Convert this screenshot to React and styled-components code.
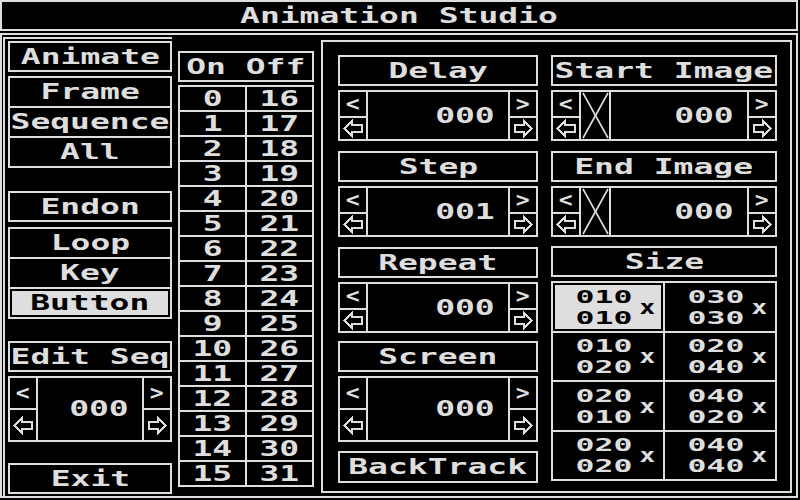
import React from 'react';
import styled, { createGlobalStyle, css } from 'styled-components';

const FG = '#dedede';

const Global = createGlobalStyle`
  html, body { margin: 0; padding: 0; background: #000; }
  body { font-family: "DejaVu Sans Mono", monospace; }
  * { box-sizing: border-box; }
`;

const Screen = styled.div`
  width: 800px;
  height: 500px;
  background: #000;
  color: ${FG};
  display: flex;
  flex-direction: column;
  overflow: hidden;
`;

const Glyphs = styled.span`
  display: inline-block;
  font-family: "DejaVu Sans Mono", monospace;
  font-weight: bold;
  font-size: 22px;
  line-height: 22px;
  white-space: pre;
  transform: scaleX(${(p) => p.$sx || 1.5});
  transform-origin: ${(p) => p.$origin || 'center'} center;
`;

const TitleBar = styled.div`
  width: 798px;
  height: 31px;
  border: 2px solid ${FG};
  display: flex;
  align-items: center;
  justify-content: center;
`;

const Frame = styled.div`
  margin-top: 2px;
  width: 798px;
  height: 465px;
  border: 2px solid ${FG};
  display: flex;
  align-items: flex-start;
`;

const LeftCol = styled.div`
  align-self: stretch;
  margin: 2px 0 0 1px;
  width: 169px;
  border-left: 2px solid ${FG};
  border-top: 2px solid ${FG};
  padding: 2px 0 0 3px;
  display: flex;
  flex-direction: column;
`;

const Header = styled.div`
  flex: none;
  height: ${(p) => p.$h || 31}px;
  margin-top: ${(p) => p.$mt || 0}px;
  border: 2px solid ${FG};
  display: flex;
  align-items: center;
  justify-content: center;
`;

const ButtonList = styled.div`
  flex: none;
  margin-top: ${(p) => p.$mt || 0}px;
  display: grid;
  grid-template-rows: repeat(3, 28px);
  gap: 2px;
  padding: 2px;
  background: ${FG};
`;

const ListItem = styled.div`
  background: #000;
  display: flex;
  align-items: center;
  justify-content: center;
  ${(p) =>
    p.$selected &&
    css`
      background: ${FG};
      color: #000;
      box-shadow: inset 0 0 0 2px #000;
    `}
`;

const Spinner = styled.div`
  flex: none;
  margin-top: 4px;
  height: ${(p) => p.$h}px;
  border: 2px solid ${FG};
  display: flex;
`;

const StepCol = styled.div`
  flex: none;
  width: 28px;
  display: flex;
  flex-direction: column;
  border-${(p) => (p.$side === 'left' ? 'left' : 'right')}: 2px solid ${FG};
`;

const StepTop = styled.div`
  flex: none;
  height: ${(p) => p.$h}px;
  border-bottom: 2px solid ${FG};
  display: flex;
  align-items: center;
  justify-content: center;
`;

const StepBottom = styled.div`
  flex: 1;
  display: flex;
  align-items: center;
  justify-content: center;
`;

const XCell = styled.div`
  flex: none;
  width: 30px;
  border-right: 2px solid ${FG};
  display: flex;
`;

const XSvg = styled.svg`
  display: block;
  width: 100%;
  height: 100%;
`;

const ValueArea = styled.div`
  flex: 1;
  display: flex;
  align-items: center;
  justify-content: flex-end;
  padding-right: 13px;
`;

const ArrowSvg = styled.svg`
  display: block;
  transform: ${(p) => (p.$flip ? 'scaleX(-1)' : 'none')};
`;

const OnOff = styled.div`
  flex: none;
  margin: 16px 0 0 6px;
  width: 136px;
  display: flex;
  flex-direction: column;
`;

const NumGrid = styled.div`
  margin-top: 3px;
  display: grid;
  grid-template-columns: 1fr 1fr;
  grid-auto-rows: 23px;
  gap: 2px;
  padding: 2px;
  background: ${FG};
`;

const NumCell = styled.div`
  background: #000;
  display: flex;
  align-items: center;
  justify-content: center;
`;

const RightPanel = styled.div`
  flex: none;
  margin: 5px 0 0 7px;
  width: 471px;
  height: 453px;
  border: 2px solid ${FG};
  padding: 13px 0 0 15px;
  display: flex;
  gap: 13px;
  align-items: flex-start;
`;

const Column = styled.div`
  flex: none;
  width: ${(p) => p.$w}px;
  display: flex;
  flex-direction: column;
`;

const SizeGrid = styled.div`
  flex: none;
  margin-top: 4px;
  height: 200px;
  display: grid;
  grid-template-columns: 1fr 1fr;
  grid-template-rows: repeat(4, 1fr);
  gap: 2px;
  padding: 2px;
  background: ${FG};
`;

const SizeCell = styled.div`
  background: #000;
  display: flex;
  align-items: center;
  justify-content: flex-end;
  padding-right: 8px;
  font-family: "DejaVu Sans Mono", monospace;
  font-weight: bold;
  ${(p) =>
    p.$selected &&
    css`
      background: ${FG};
      color: #000;
      box-shadow: inset 0 0 0 2px #000;
    `}
`;

const SizeStack = styled.span`
  display: flex;
  flex-direction: column;
  font-size: 18px;
  line-height: 21px;
  transform: scaleX(1.75);
  transform-origin: right center;
`;

const SizeX = styled.span`
  margin-left: 10px;
  font-size: 20px;
  line-height: 20px;
  transform: scaleX(1.3);
  transform-origin: right center;
`;

const Arrow = ({ right }) => (
  <ArrowSvg $flip={right} width="20" height="19" viewBox="0 0 20 19">
    <polygon
      points="1.5,9.5 9,2 9,6 18.5,6 18.5,13 9,13 9,17"
      fill="none"
      stroke={FG}
      strokeWidth="2"
      strokeLinejoin="miter"
      shapeRendering="crispEdges"
    />
  </ArrowSvg>
);

const Cross = () => (
  <XCell>
    <XSvg viewBox="0 0 28 47" preserveAspectRatio="none">
      <line x1="2" y1="1" x2="27" y2="46" stroke={FG} strokeWidth="1.6" />
      <line x1="27" y1="1" x2="2" y2="46" stroke={FG} strokeWidth="1.6" />
    </XSvg>
  </XCell>
);

const ValueSpinner = ({ value, h = 51, top = 26, cross }) => (
  <Spinner $h={h}>
    <StepCol $side="right">
      <StepTop $h={top}>
        <Glyphs $sx={1.05}>{'<'}</Glyphs>
      </StepTop>
      <StepBottom>
        <Arrow />
      </StepBottom>
    </StepCol>
    {cross && <Cross />}
    <ValueArea>
      <Glyphs $origin="right">{value}</Glyphs>
    </ValueArea>
    <StepCol $side="left">
      <StepTop $h={top}>
        <Glyphs $sx={1.05}>{'>'}</Glyphs>
      </StepTop>
      <StepBottom>
        <Arrow right />
      </StepBottom>
    </StepCol>
  </Spinner>
);

const sizes = [
  ['010', '010', true],
  ['030', '030'],
  ['010', '020'],
  ['020', '040'],
  ['020', '010'],
  ['040', '020'],
  ['020', '020'],
  ['040', '040'],
];

export default function App() {
  const rows = Array.from({ length: 16 }, (_, i) => i);
  return (
    <>
      <Global />
      <Screen>
        <TitleBar>
          <Glyphs>Animation Studio</Glyphs>
        </TitleBar>
        <Frame>
          <LeftCol>
            <Header>
              <Glyphs>Animate</Glyphs>
            </Header>
            <ButtonList $mt={4}>
              <ListItem><Glyphs>Frame</Glyphs></ListItem>
              <ListItem><Glyphs>Sequence</Glyphs></ListItem>
              <ListItem><Glyphs>All</Glyphs></ListItem>
            </ButtonList>
            <Header $mt={23}>
              <Glyphs>Endon</Glyphs>
            </Header>
            <ButtonList $mt={5}>
              <ListItem><Glyphs>Loop</Glyphs></ListItem>
              <ListItem><Glyphs>Key</Glyphs></ListItem>
              <ListItem $selected><Glyphs>Button</Glyphs></ListItem>
            </ButtonList>
            <Header $mt={22}>
              <Glyphs>Edit Seq</Glyphs>
            </Header>
            <ValueSpinner value="000" h={66} top={32} />
            <Header $mt={21}>
              <Glyphs>Exit</Glyphs>
            </Header>
          </LeftCol>

          <OnOff>
            <Header>
              <Glyphs>On Off</Glyphs>
            </Header>
            <NumGrid>
              {rows.map((i) => (
                <React.Fragment key={i}>
                  <NumCell><Glyphs>{String(i)}</Glyphs></NumCell>
                  <NumCell><Glyphs>{String(i + 16)}</Glyphs></NumCell>
                </React.Fragment>
              ))}
            </NumGrid>
          </OnOff>

          <RightPanel>
            <Column $w={200}>
              <Header><Glyphs>Delay</Glyphs></Header>
              <ValueSpinner value="000" />
              <Header $mt={10}><Glyphs>Step</Glyphs></Header>
              <ValueSpinner value="001" />
              <Header $mt={10}><Glyphs>Repeat</Glyphs></Header>
              <ValueSpinner value="000" />
              <Header $mt={8}><Glyphs>Screen</Glyphs></Header>
              <ValueSpinner value="000" h={66} top={32} />
              <Header $mt={9} $h={32}><Glyphs>BackTrack</Glyphs></Header>
            </Column>
            <Column $w={226}>
              <Header><Glyphs>Start Image</Glyphs></Header>
              <ValueSpinner value="000" cross />
              <Header $mt={10}><Glyphs>End Image</Glyphs></Header>
              <ValueSpinner value="000" cross />
              <Header $mt={9}><Glyphs>Size</Glyphs></Header>
              <SizeGrid>
                {sizes.map(([a, b, sel], i) => (
                  <SizeCell key={i} $selected={sel}>
                    <SizeStack>
                      <span>{a}</span>
                      <span>{b}</span>
                    </SizeStack>
                    <SizeX>x</SizeX>
                  </SizeCell>
                ))}
              </SizeGrid>
            </Column>
          </RightPanel>
        </Frame>
      </Screen>
    </>
  );
}
